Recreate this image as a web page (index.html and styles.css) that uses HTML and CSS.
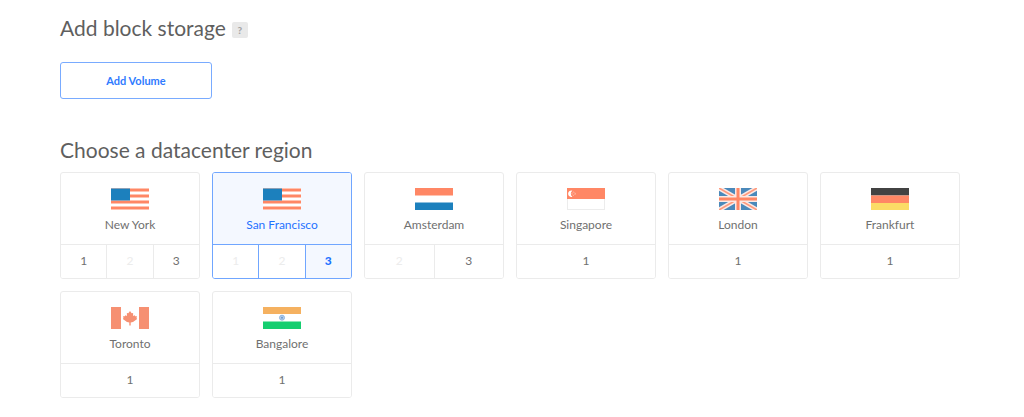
FILE: index.html
```html
<!DOCTYPE html>
<html lang="en">
<head>
  <meta charset="UTF-8" />
  <meta name="viewport" content="width=device-width, initial-scale=1" />
  <title>Create Droplets</title>
  <link rel="stylesheet" href="styles.css">
</head>
<body>
  <main class="container">
    <section class="storage">
      <h2>Add block storage <button type="button" class="help" aria-label="Help">?</button></h2>
      <button type="button" class="add-volume">Add Volume</button>
    </section>

    <section class="datacenter">
      <h2>Choose a datacenter region</h2>
      <div class="regions">
        <div class="region">
          <div class="region-top">
            <svg class="flag" viewBox="0 0 38 22">
              <rect width="38" height="22" fill="#fff" />
              <path d="M0 .5h38v3H0zM0 6.5h38v3H0zM0 12.5h38v3H0zM0 18.5h38v3H0z" fill="#ff8765" />
              <rect y=".5" width="19" height="12" fill="#1c80bd" />
            </svg>
            <span class="name">New York</span>
          </div>
          <div class="slots">
            <button type="button">1</button>
            <button type="button" disabled>2</button>
            <button type="button">3</button>
          </div>
        </div>

        <div class="region selected">
          <div class="region-top">
            <svg class="flag" viewBox="0 0 38 22">
              <rect width="38" height="22" fill="#fff" />
              <path d="M0 .5h38v3H0zM0 6.5h38v3H0zM0 12.5h38v3H0zM0 18.5h38v3H0z" fill="#ff8765" />
              <rect y=".5" width="19" height="12" fill="#1c80bd" />
            </svg>
            <span class="name">San Francisco</span>
          </div>
          <div class="slots">
            <button type="button" disabled>1</button>
            <button type="button" disabled>2</button>
            <button type="button" class="active">3</button>
          </div>
        </div>

        <div class="region">
          <div class="region-top">
            <svg class="flag" viewBox="0 0 38 22">
              <rect width="38" height="7.5" fill="#ff8765" />
              <rect y="14.5" width="38" height="7.5" fill="#1c80bd" />
            </svg>
            <span class="name">Amsterdam</span>
          </div>
          <div class="slots">
            <button type="button" disabled>2</button>
            <button type="button">3</button>
          </div>
        </div>

        <div class="region">
          <div class="region-top">
            <svg class="flag" viewBox="0 0 38 22">
              <rect x=".5" y=".5" width="37" height="21" fill="#fff" stroke="#ececec" />
              <rect width="38" height="11" fill="#ff8765" />
              <path d="M5.4 2.7a3.2 3.2 0 1 0 0 6a3.6 3.6 0 0 1 0-6z" fill="#fff" />
              <circle cx="6.6" cy="5.7" r="1.6" fill="none" stroke="#ffd0c2" stroke-width="1" stroke-dasharray="1 1" />
            </svg>
            <span class="name">Singapore</span>
          </div>
          <div class="slots">
            <button type="button">1</button>
          </div>
        </div>

        <div class="region">
          <div class="region-top">
            <svg class="flag" viewBox="0 0 38 22">
              <rect width="38" height="22" fill="#4b89ba" />
              <path d="M0 0l38 22M38 0L0 22" stroke="#fbe9e5" stroke-width="4.6" />
              <path d="M0 0l38 22M38 0L0 22" stroke="#ff9a7d" stroke-width="1.6" />
              <path d="M19 0v22M0 11h38" stroke="#fbe9e5" stroke-width="6" />
              <path d="M19 0v22M0 11h38" stroke="#ff8765" stroke-width="3" />
            </svg>
            <span class="name">London</span>
          </div>
          <div class="slots">
            <button type="button">1</button>
          </div>
        </div>

        <div class="region">
          <div class="region-top">
            <svg class="flag" viewBox="0 0 38 22">
              <rect width="38" height="7.5" fill="#424242" />
              <rect y="7.5" width="38" height="7.5" fill="#ff8765" />
              <rect y="15" width="38" height="7" fill="#fbdc66" />
            </svg>
            <span class="name">Frankfurt</span>
          </div>
          <div class="slots">
            <button type="button">1</button>
          </div>
        </div>

        <div class="region">
          <div class="region-top">
            <svg class="flag" viewBox="0 0 38 22">
              <path d="M0 0h10v22H0zM28 0h10v22H28z" fill="#f69072" />
              <path d="M19 4l1.7 2.2 1.4-.2v3l1.6-.7.5.9 1.8.1-.5 1.8.7.8-4.2 3.2-2.3.5v3h-1.4v-3l-2.3-.5-4.2-3.2.7-.8-.5-1.8 1.8-.1.5-.9 1.6.7V6l1.4.2z" fill="#f69072" />
            </svg>
            <span class="name">Toronto</span>
          </div>
          <div class="slots">
            <button type="button">1</button>
          </div>
        </div>

        <div class="region">
          <div class="region-top">
            <svg class="flag" viewBox="0 0 38 22">
              <rect width="38" height="7" fill="#f5b160" />
              <rect y="14.5" width="38" height="7.5" fill="#15ce70" />
              <circle cx="19" cy="10.7" r="2.5" fill="#b4cdec" stroke="#92b5de" stroke-width="1" />
              <circle cx="19" cy="10.7" r="1" fill="#6d9ad0" />
            </svg>
            <span class="name">Bangalore</span>
          </div>
          <div class="slots">
            <button type="button">1</button>
          </div>
        </div>
      </div>
    </section>
  </main>
</body>
</html>
```

FILE: styles.css
```css
* {
  box-sizing: border-box;
}

body {
  margin: 0;
  background: #fff;
  font-family: Lato, "Open Sans", sans-serif;
  color: #707070;
}

.container {
  padding: 16px 64px 16px 60px;
}

h2 {
  display: flex;
  align-items: center;
  gap: 6px;
  margin: 0;
  font-size: 21px;
  line-height: 24px;
  font-weight: 400;
  color: #5f5f5f;
}

button {
  font-family: inherit;
  cursor: pointer;
}

.help {
  width: 16px;
  height: 16px;
  margin-top: 4px;
  padding: 0;
  border: none;
  border-radius: 2px;
  background: #e9e9e9;
  color: #a5a5a5;
  font-size: 10px;
  line-height: 16px;
  font-weight: 900;
}

.add-volume {
  display: block;
  width: 152px;
  height: 37px;
  margin-top: 22px;
  padding: 0;
  border: 1px solid #79abff;
  border-radius: 3px;
  background: #fff;
  color: #2f7bff;
  font-size: 11px;
  font-weight: 700;
}

.datacenter {
  margin-top: 39px;
}

.regions {
  display: grid;
  grid-template-columns: repeat(6, 1fr);
  gap: 12px;
  margin-top: 10px;
}

.region {
  border: 1px solid #ebebeb;
  border-radius: 3px;
  overflow: hidden;
}

.region-top {
  display: flex;
  flex-direction: column;
  align-items: center;
  gap: 7px;
  padding: 15px 0 11px;
  border-bottom: 1px solid #ebebeb;
}

.flag {
  display: block;
  width: 38px;
  height: 22px;
}

.name {
  font-size: 12px;
  line-height: 16px;
}

.slots {
  display: flex;
}

.slots button {
  flex: 1;
  height: 33px;
  padding: 0 0 2px;
  border: none;
  border-left: 1px solid #ebebeb;
  background: #fff;
  color: #707070;
  font-size: 12px;
}

.slots button:first-child {
  border-left: none;
}

.slots button:disabled {
  color: #ececec;
  cursor: default;
}

.selected,
.selected .region-top,
.selected .slots button {
  border-color: #70a6ff;
}

.selected .region-top,
.selected .slots .active {
  background: #f4f8ff;
}

.selected .name,
.selected .slots .active {
  color: #1f72ff;
}

.selected .slots .active {
  font-weight: 900;
}
```
